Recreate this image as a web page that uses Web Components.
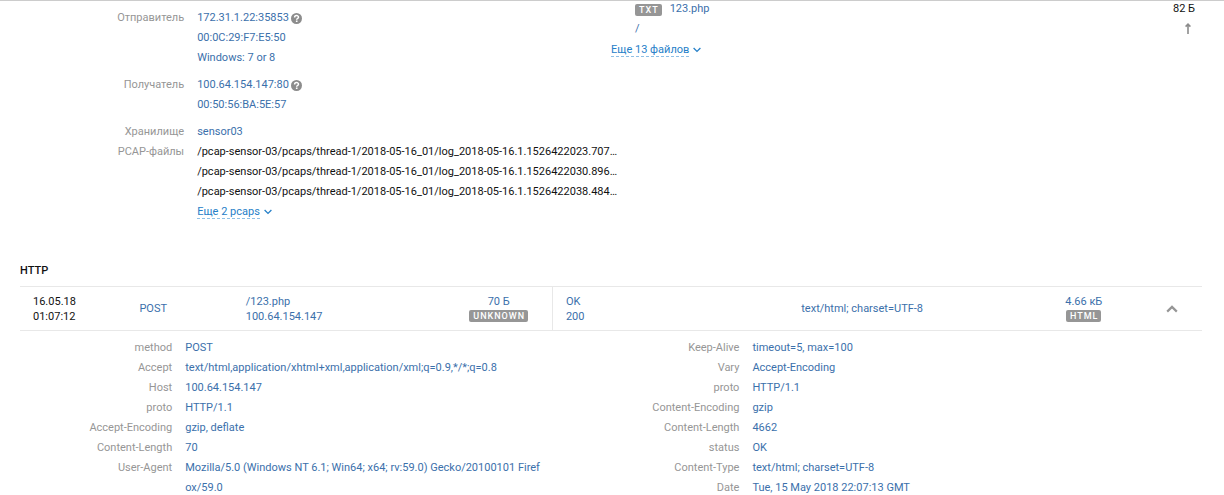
<!DOCTYPE html>
<html lang="ru">
<head>
<meta charset="utf-8">
<meta name="viewport" content="width=device-width, initial-scale=1">
<title>HTTP</title>
<style>
body{
  margin:0;
  font:11px/20px Roboto, "Noto Sans", sans-serif;
  color:#111;
  background:#fff;
}
</style>
</head>
<body>
<session-page>
  <session-info slot="info">
    <prop-group>
      <prop-row label="Отправитель">
        <value-link hint="Об узле">172.31.1.22:35853</value-link>
        <value-link>00:0C:29:F7:E5:50</value-link>
        <value-link>Windows: 7 or 8</value-link>
      </prop-row>
    </prop-group>
    <prop-group>
      <prop-row label="Получатель">
        <value-link hint="Об узле">100.64.154.147:80</value-link>
        <value-link>00:50:56:BA:5E:57</value-link>
      </prop-row>
    </prop-group>
    <prop-group>
      <prop-row label="Хранилище"><value-link>sensor03</value-link></prop-row>
      <prop-row label="PCAP-файлы">
        <value-link dark>/pcap-sensor-03/pcaps/thread-1/2018-05-16_01/log_2018-05-16.1.1526422023.707…</value-link>
        <value-link dark>/pcap-sensor-03/pcaps/thread-1/2018-05-16_01/log_2018-05-16.1.1526422030.896…</value-link>
        <value-link dark>/pcap-sensor-03/pcaps/thread-1/2018-05-16_01/log_2018-05-16.1.1526422038.484…</value-link>
        <more-button>Еще 2 pcaps</more-button>
      </prop-row>
    </prop-group>
  </session-info>

  <file-list slot="files" type="TXT" name="123.php" path="/" size="82 Б">
    <more-button>Еще 13 файлов</more-button>
  </file-list>

  <http-exchange slot="log">
    <span slot="time">16.05.18<br>01:07:12</span>
    <value-link slot="method">POST</value-link>
    <value-link slot="url">/123.php</value-link>
    <value-link slot="url">100.64.154.147</value-link>
    <value-link slot="sent">70 Б</value-link>
    <type-badge slot="sent">UNKNOWN</type-badge>
    <value-link slot="status">OK</value-link>
    <value-link slot="status">200</value-link>
    <value-link slot="mime">text/html; charset=UTF-8</value-link>
    <value-link slot="received">4.66 кБ</value-link>
    <type-badge slot="received">HTML</type-badge>

    <prop-row slot="request" label="method"><value-link>POST</value-link></prop-row>
    <prop-row slot="request" label="Accept"><value-link>text/html,application/xhtml+xml,application/xml;q=0.9,*/*;q=0.8</value-link></prop-row>
    <prop-row slot="request" label="Host"><value-link>100.64.154.147</value-link></prop-row>
    <prop-row slot="request" label="proto"><value-link>HTTP/1.1</value-link></prop-row>
    <prop-row slot="request" label="Accept-Encoding"><value-link>gzip, deflate</value-link></prop-row>
    <prop-row slot="request" label="Content-Length"><value-link>70</value-link></prop-row>
    <prop-row slot="request" label="User-Agent"><value-link>Mozilla/5.0 (Windows NT 6.1; Win64; x64; rv:59.0) Gecko/20100101 Firefox/59.0</value-link></prop-row>

    <prop-row slot="response" label="Keep-Alive"><value-link>timeout=5, max=100</value-link></prop-row>
    <prop-row slot="response" label="Vary"><value-link>Accept-Encoding</value-link></prop-row>
    <prop-row slot="response" label="proto"><value-link>HTTP/1.1</value-link></prop-row>
    <prop-row slot="response" label="Content-Encoding"><value-link>gzip</value-link></prop-row>
    <prop-row slot="response" label="Content-Length"><value-link>4662</value-link></prop-row>
    <prop-row slot="response" label="status"><value-link>OK</value-link></prop-row>
    <prop-row slot="response" label="Content-Type"><value-link>text/html; charset=UTF-8</value-link></prop-row>
    <prop-row slot="response" label="Date"><value-link>Tue, 15 May 2018 22:07:13 GMT</value-link></prop-row>
  </http-exchange>
</session-page>

<script>
const base = `
*{ box-sizing:border-box; }
a{ color:inherit; text-decoration:none; }
button{ padding:0; border:0; background:none; font:inherit; color:inherit; cursor:pointer; }
svg{ display:block; }
`;

window.customElements.define('session-page', class extends HTMLElement {

  constructor(){ super(); this.attachShadow({mode:'open'});
    this.shadowRoot.innerHTML = `
    <style>
${base}
:host{
  display:block;
  --cl-link:#3b70ab;
  --cl-more:#2680c8;
  --cl-muted:#969696;
  --cl-line:#e8e8e8;
  border-top:1px solid #ccc;
  padding:0 22px 0 20px;
}
.top{
  display:grid;
  grid-template-columns:1fr 1fr;
}
h2{
  margin:39px 0 5px;
  font-size:11px;
  font-weight:500;
  line-height:20px;
}
    </style>
    <section class="top">
      <slot name="info"></slot>
      <slot name="files"></slot>
    </section>
    <section>
      <h2>HTTP</h2>
      <slot name="log"></slot>
    </section>
    `;
  }

});

window.customElements.define('session-info', class extends HTMLElement {

  constructor(){ super(); this.attachShadow({mode:'open'});
    this.shadowRoot.innerHTML = `
    <style>
:host{
  display:flex;
  flex-direction:column;
  gap:7px;
  min-width:0;
  padding-top:7px;
  --label:5fr;
  --value:13fr;
}
    </style>
    <slot></slot>
    `;
  }

});

window.customElements.define('prop-group', class extends HTMLElement {

  constructor(){ super(); this.attachShadow({mode:'open'});
    this.shadowRoot.innerHTML = `
    <style>
:host{ display:block; }
    </style>
    <slot></slot>
    `;
  }

});

// label on the left, one or more values on the right
window.customElements.define('prop-row', class extends HTMLElement {

  get label(){ return this.getAttribute("label"); }

  constructor(){ super(); this.attachShadow({mode:'open'}); }

  connectedCallback(){
    this.shadowRoot.innerHTML = `
    <style>
${base}
:host{ display:block; }
dl{
  display:grid;
  grid-template-columns:minmax(0, var(--label)) minmax(0, var(--value));
  margin:0;
}
dt{
  color:var(--cl-muted);
  text-align:right;
}
dd{
  margin:0;
  padding-left:13px;
}
    </style>
    <dl>
      <dt>${this.label}</dt>
      <dd><slot></slot></dd>
    </dl>
    `;
  }

});

window.customElements.define('value-link', class extends HTMLElement {

  get hint(){ return this.getAttribute("hint"); }

  constructor(){ super(); this.attachShadow({mode:'open'}); }

  connectedCallback(){
    const button = this.hint ? `
      <button type="button" aria-label="${this.hint}">
        <svg width="11" height="11" viewBox="0 0 11 11">
          <circle cx="5.5" cy="5.5" r="5.5" fill="#8c8c8c"/>
          <path d="M3.6 4.4c0-2.4 3.9-2.3 3.9-.2 0 1.3-1.8 1.3-1.8 2.5" fill="none" stroke="#fff" stroke-width="1.5"/>
          <rect x="4.9" y="7.5" width="1.6" height="1.5" fill="#fff"/>
        </svg>
      </button>` : '';
    this.shadowRoot.innerHTML = `
    <style>
${base}
:host{
  display:block;
  color:var(--cl-link);
  word-break:break-all;
}
:host([dark]){
  color:#111;
  white-space:nowrap;
}
:host([hint]){
  display:flex;
  align-items:center;
  gap:2px;
}
    </style>
    <a href="#"><slot></slot></a>${button}
    `;
  }

});

window.customElements.define('more-button', class extends HTMLElement {

  constructor(){ super(); this.attachShadow({mode:'open'});
    this.shadowRoot.innerHTML = `
    <style>
${base}
:host{ display:block; }
button{
  display:flex;
  align-items:center;
  gap:4px;
  height:20px;
  color:var(--cl-more);
}
span{
  line-height:13px;
  border-bottom:1px dashed #8fc0e6;
}
    </style>
    <button type="button">
      <span><slot></slot></span>
      <svg width="8" height="6" viewBox="0 0 8 6"><path d="M.6 1l3.4 3.4L7.4 1" fill="none" stroke="currentColor" stroke-width="1.3"/></svg>
    </button>
    `;
  }

});

window.customElements.define('type-badge', class extends HTMLElement {

  constructor(){ super(); this.attachShadow({mode:'open'});
    this.shadowRoot.innerHTML = `
    <style>
:host{
  display:inline-block;
  margin-top:1px;
  padding:0 3px 0 4px;
  border-radius:2px;
  background:#969696;
  color:#fff;
  font-size:9px;
  font-weight:500;
  line-height:12px;
  letter-spacing:1px;
  vertical-align:top;
}
    </style>
    <slot></slot>
    `;
  }

});

window.customElements.define('file-list', class extends HTMLElement {

  get type(){ return this.getAttribute("type"); }
  get name(){ return this.getAttribute("name"); }
  get path(){ return this.getAttribute("path"); }
  get size(){ return this.getAttribute("size"); }

  constructor(){ super(); this.attachShadow({mode:'open'}); }

  connectedCallback(){
    this.shadowRoot.innerHTML = `
    <style>
${base}
:host{ display:block; }
.file{
  display:flex;
  justify-content:space-between;
  padding:1px 7px 4px 24px;
  line-height:14px;
}
.name, .size{
  display:flex;
  flex-direction:column;
  gap:6px;
}
.size{
  align-items:flex-end;
}
.title{
  display:flex;
  align-items:center;
  gap:8px;
}
a{ color:var(--cl-link); }
.size svg{ margin:1px 4px 0 0; }
    </style>
    <div class="file">
      <div class="name">
        <div class="title"><type-badge>${this.type}</type-badge><a href="#">${this.name}</a></div>
        <a href="#">${this.path}</a>
      </div>
      <div class="size">
        <span>${this.size}</span>
        <svg width="6" height="11" viewBox="0 0 6 11"><path d="M3 11V1M.6 3.6L3 1.2l2.4 2.4" fill="none" stroke="#8c8c8c" stroke-width="1.6"/></svg>
      </div>
    </div>
    <slot></slot>
    `;
  }

});

window.customElements.define('http-exchange', class extends HTMLElement {

  constructor(){ super(); this.attachShadow({mode:'open'});
    this.shadowRoot.innerHTML = `
    <style>
${base}
:host{ display:block; }
table{
  width:100%;
  table-layout:fixed;
  border-spacing:0;
  border-top:1px solid var(--cl-line);
  border-bottom:1px solid var(--cl-line);
  line-height:15px;
}
td{
  height:43px;
  padding:0 13px;
}
.center{
  padding:0;
  text-align:center;
}
.divided{ border-left:1px solid var(--cl-line); }
.toggle{
  width:20px;
  height:20px;
  vertical-align:middle;
}
.toggle svg{ margin:auto; }
.details{
  display:grid;
  grid-template-columns:45fr 55fr;
  padding-top:7px;
}
.request{
  padding-right:10px;
  --label:7fr;
  --value:17fr;
}
.response{
  --label:15fr;
  --value:37fr;
}
    </style>
    <table>
      <colgroup>
        <col style="width:9%"><col style="width:9%"><col style="width:18%"><col style="width:9%">
        <col style="width:20%"><col style="width:20%"><col style="width:10%"><col style="width:5%">
      </colgroup>
      <tr>
        <td><slot name="time"></slot></td>
        <td><slot name="method"></slot></td>
        <td><slot name="url"></slot></td>
        <td class="center"><slot name="sent"></slot></td>
        <td class="divided"><slot name="status"></slot></td>
        <td><slot name="mime"></slot></td>
        <td class="center"><slot name="received"></slot></td>
        <td class="center">
          <button class="toggle" type="button" aria-label="Свернуть">
            <svg width="12" height="8" viewBox="0 0 12 8"><path d="M1.2 6.6L6 1.9l4.8 4.7" fill="none" stroke="#969696" stroke-width="2.2"/></svg>
          </button>
        </td>
      </tr>
    </table>
    <div class="details">
      <div class="request"><slot name="request"></slot></div>
      <div class="response"><slot name="response"></slot></div>
    </div>
    `;
  }

});
</script>
</body>
</html>
